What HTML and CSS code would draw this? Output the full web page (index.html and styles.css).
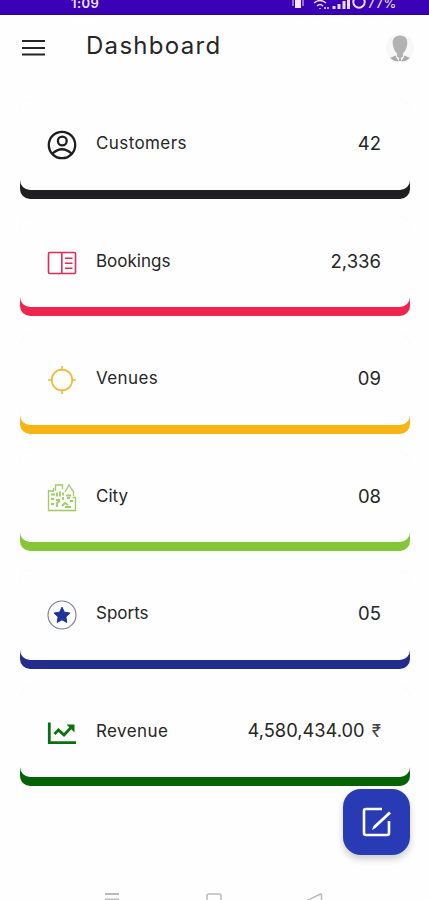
FILE: index.html
```html
<!DOCTYPE html>
<html lang="en">
<head>
<meta charset="utf-8">
<meta name="viewport" content="width=device-width, initial-scale=1">
<title>Dashboard</title>
<link rel="stylesheet" href="styles.css">
</head>
<body>
<div class="status">
  <span class="clock">1:09</span>
  <div class="indicators">
    <svg width="14" height="16" viewBox="0 0 14 16"><path d="M4 0h6v13H4z" fill="#f1e8ff"/><path d="M2 4v7M12 4v7" stroke="#a98ce6" stroke-width="1.600"/></svg>
    <svg width="18" height="16" viewBox="0 0 18 16" fill="none" stroke="#e8dcff" stroke-width="1.500"><path d="M2 8q6-5 12 0M5 11q3-3 6 0M8 13v1M13 14v-2M16 14v-2"/></svg>
    <svg width="18" height="16" viewBox="0 0 18 16" stroke="#e8dcff" stroke-width="3"><path d="M2 14v-3M7 14V9M12 14V6M16.500 14V3"/></svg>
    <svg width="14" height="16" viewBox="0 0 14 16"><circle cx="7" cy="7" r="5.700" fill="none" stroke="#e8dcff" stroke-width="2"/></svg>
    <span class="battery">77%</span>
  </div>
</div>
<header class="topbar">
  <svg class="menu" width="24" height="18" viewBox="0 0 24 18" stroke="#252525" stroke-width="2.200"><path d="M0 2h23M0 9h23M0 15.500h23"/></svg>
  <h1>Dashboard</h1>
  <svg class="avatar" width="28" height="30" viewBox="0 0 28 30"><circle cx="14" cy="15" r="14" fill="#f7f7f7"/><path d="M14 2.500c-5 0-8 3.500-7.200 8.500.4 4.500 2.200 7.500 4.200 9.500v3l3 2 3-2v-3c2-2 3.800-5 4.200-9.500C22 6 19 2.500 14 2.500z" fill="#b2b2b2"/><path d="M9.500 22.500L4 25q4 3.500 8.500 3.500zM18.500 22.500L24 25q-4 3.500-8.500 3.500z" fill="#aaa"/><path d="M14 24l1.300 4h-2.600z" fill="#999"/></svg>
</header>
<main class="cards">
  <section class="card black">
    <svg class="icon" viewBox="0 0 30 30" fill="none" stroke="#1e1e1e" stroke-width="2.300"><circle cx="15" cy="15" r="13.200"/><circle cx="15.300" cy="11" r="4.400"/><path d="M5.500 23.500q9.500-8.500 19 0"/></svg>
    <span class="label wide">Customers</span><span class="value">42</span>
  </section>
  <section class="card red">
    <svg class="icon" viewBox="0 0 30 30" fill="none" stroke="#e02b58" stroke-width="1.600"><rect x="1.500" y="4.500" width="27" height="21" rx="1.200"/><path d="M14.800 4.500v21M18 10.200h7.500M18 15.200h7.500M18 20.200h7.500"/></svg>
    <span class="label">Bookings</span><span class="value">2,336</span>
  </section>
  <section class="card yellow">
    <svg class="icon" viewBox="0 0 30 30" fill="none" stroke="#edbc36" stroke-width="1.700"><circle cx="15" cy="15" r="10.300"/><path d="M15 1v4.500M15 24.500V29M1 15h4.500M24.500 15H29"/></svg>
    <span class="label wide">Venues</span><span class="value">09</span>
  </section>
  <section class="card lime">
    <svg class="icon" viewBox="0 0 30 30" fill="none" stroke="#9dcc62" stroke-width="1.300"><path d="M1.500 7v20.500h27V14.500h-3M1.500 8h5V5M8.500 8V2h7v4M18 9l4-7 4.500 7v4"/><path d="M4 11.500h4m2-2v4m3-5v5m3-4v3m3 0h5M4 16h3m2 1h4m3 0v-3m4 1h3M4 21h3m3 3v-4l3-2m2 5 3-3 3 2m2-4h3m-8 6h6" stroke-width="1.800"/></svg>
    <span class="label">City</span><span class="value">08</span>
  </section>
  <section class="card blue">
    <svg class="icon" viewBox="0 0 30 30"><circle cx="15" cy="15" r="14" fill="none" stroke="#777b91" stroke-width="1.100"/><path d="M15 7.200l2.400 5 5.500.8-4 3.900.9 5.500-4.800-2.600-4.800 2.600.9-5.500-4-3.900 5.500-.8z" fill="#1b349f" stroke="#1b349f" stroke-width="1" stroke-linejoin="round"/></svg>
    <span class="label">Sports</span><span class="value">05</span>
  </section>
  <section class="card green">
    <svg class="icon" viewBox="0 0 30 30" fill="none" stroke="#0b700b" stroke-width="2.800"><path d="M2.300 4.500v20.200H29"/><path d="M7.500 16l4-4 5.500 5 7.500-8"/><path d="M19.500 6.500H27.500v8z" fill="#0b700b" stroke="none"/></svg>
    <span class="label wide">Revenue</span><span class="value amount">4,580,434.00 <span class="rupee">₹</span></span>
  </section>
</main>
<button class="fab" aria-label="Edit"><svg width="32" height="32" viewBox="0 0 32 32" fill="none" stroke="#fff" stroke-width="2.600"><path d="M21 3H5a2 2 0 0 0-2 2v22a2 2 0 0 0 2 2h21a2 2 0 0 0 2-2V15"/><path d="M11 24l1.500-4L28 5.500l2 2L14.500 22z" fill="#fff" stroke="none"/></svg></button>
<nav class="sysnav">
  <svg width="16" height="10" viewBox="0 0 16 10" stroke="#bababa" stroke-width="1.800"><path d="M1 2h14M1 7.500h14"/></svg>
  <svg width="16" height="10" viewBox="0 0 16 10" fill="none" stroke="#bababa" stroke-width="1.500"><path d="M1 10V4q0-2 2-2h10q2 0 2 2v6"/></svg>
  <svg width="16" height="10" viewBox="0 0 16 10" fill="none" stroke="#bababa" stroke-width="1.500"><path d="M0 8.500L13.500 2q1-.3 1 .8V10"/></svg>
</nav>
</body>
</html>
```
FILE: styles.css
```css
* { box-sizing: border-box; }
body {
  margin: 0;
  width: 429px;
  height: 900px;
  overflow: hidden;
  position: relative;
  display: flex;
  flex-direction: column;
  background: #fefefe;
  color: #262626;
  font-family: Inter, "Liberation Sans", sans-serif;
}
.status {
  height: 15px;
  flex: none;
  display: flex;
  justify-content: space-between;
  padding: 0 32px 0 71px;
  background: #3b00b5;
  border-bottom: 1px solid #2b0790;
  color: #eee6ff;
  overflow: hidden;
}
.clock, .battery { font-size: 13px; line-height: 15px; margin-top: -4px; }
.clock { font-weight: 600; letter-spacing: .4px; }
.indicators { display: flex; gap: 2px; }
.indicators svg { flex: none; margin-top: -5px; }
.indicators svg:first-child { margin-right: 5px; }
.battery { margin-left: -1px; letter-spacing: .6px; }
.topbar {
  height: 66px;
  flex: none;
  display: flex;
  align-items: center;
  padding: 0 15px 0 22px;
}
.menu { margin-right: 40px; }
h1 {
  margin: 0;
  flex: 1;
  font-size: 24px;
  line-height: 30px;
  font-weight: 400;
  letter-spacing: 1.3px;
  padding-bottom: 4px;
}
.cards {
  display: flex;
  flex-direction: column;
  gap: 27.5px;
  padding: 18.7px 19px 0 20px;
}
.card {
  height: 90px;
  display: flex;
  align-items: center;
  padding: 0 29px 3px 27px;
  border-radius: 10px;
  background: #fefefe;
  box-shadow: 0 9px 0 var(--accent), 0 0 1px #eee;
}
.black { --accent: #1f1f22; }
.red { --accent: #ef244f; }
.yellow { --accent: #f6b513; }
.lime { --accent: #85c638; }
.blue { --accent: #222d8d; }
.green { --accent: #066202; }
.icon { width: 30px; height: 30px; flex: none; margin-right: 19px; position: relative; top: 2px; }
.label { flex: 1; font-size: 17px; line-height: 24px; }
.label.wide { letter-spacing: .4px; }
.value { font-size: 18.5px; line-height: 24px; white-space: nowrap; }
.amount { font-size: 18.3px; }
.rupee { font-size: 17px; margin-left: 2px; color: #444; }
.fab {
  position: absolute;
  left: 343px;
  top: 789px;
  width: 67px;
  height: 66px;
  padding: 0;
  border: 0;
  border-radius: 18px;
  background: #283bb5;
  box-shadow: 0 4px 7px #0003;
  display: grid;
  place-items: center;
}
.sysnav {
  margin-top: auto;
  height: 8px;
  display: flex;
  justify-content: space-between;
  padding: 0 106px 0 104px;
  overflow: hidden;
}
.sysnav svg { flex: none; }
```
